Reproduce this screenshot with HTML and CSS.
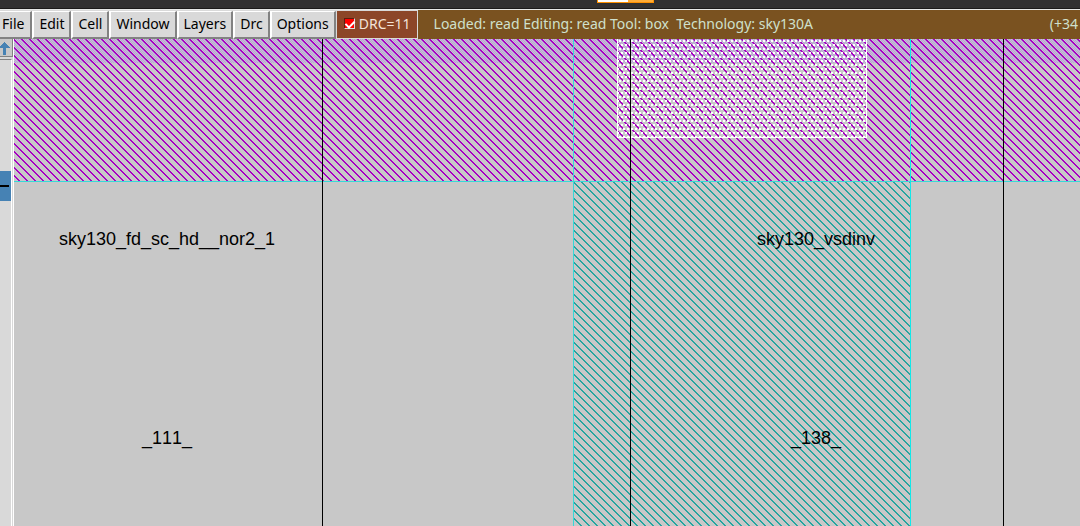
FILE: index.html
```html
<!DOCTYPE html>
<html lang="en">
<head>
<meta charset="utf-8">
<title>Magic layout</title>
<link rel="stylesheet" href="styles.css">
</head>
<body>
<div class="titlebar"><span class="tab"></span></div>
<header class="toolbar">
  <nav class="menus">
    <button>File</button><button>Edit</button><button>Cell</button><button>Window</button><button>Layers</button><button>Drc</button><button>Options</button>
  </nav>
  <label class="drc"><input type="checkbox" checked>DRC=11</label>
  <div class="status"><span class="loaded">Loaded: read Editing: read Tool: box&nbsp; Technology: sky130A</span><span class="coords">(+34</span></div>
</header>
<main class="workspace">
  <aside class="scroll">
    <button class="up" aria-label="Scroll up"><svg width="12" height="14" viewBox="0 0 12 14" shape-rendering="crispEdges"><path d="M4 0h1v1h1v1h1v1h1v1h1v1h1v1H6v7H3V6H0V4h1V3h1V2h1V1h1z" fill="#4682b4"/></svg></button>
    <div class="track"><div class="thumb"></div></div>
  </aside>
  <svg class="canvas" shape-rendering="crispEdges">
    <defs>
      <pattern id="metal" width="8" height="8" patternUnits="userSpaceOnUse" x="7">
        <path d="M0 0h2v1H0zM1 1h2v1H1zM2 2h2v1H2zM3 3h2v1H3zM4 4h2v1H4zM5 5h2v1H5zM6 6h2v1H6zM7 7h1v1H7zM0 7h1v1H0z" fill="#a800c4"/>
      </pattern>
      <pattern id="select" width="8" height="8" patternUnits="userSpaceOnUse">
        <path d="M0 0h2v1H0zM1 1h2v1H1zM2 2h2v1H2zM3 3h2v1H3zM4 4h2v1H4zM5 5h2v1H5zM6 6h2v1H6zM7 7h1v1H7zM0 7h1v1H0z" fill="#26a5a0"/>
      </pattern>
      <pattern id="well" width="2" height="2" patternUnits="userSpaceOnUse">
        <path d="M0 0h1v1H0zM1 1h1v1H1z" fill="#b49cdc"/>
      </pattern>
      <pattern id="contact" width="4" height="8" patternUnits="userSpaceOnUse" x="1" y="1">
        <path d="M0 0h2v2H0zM2 4h2v2H2z" fill="#fff"/>
      </pattern>
    </defs>
    <rect width="100%" height="24" fill="url(#well)"/>
    <rect width="100%" height="142" fill="url(#metal)"/>
    <rect x="560" y="143" width="336" height="100%" fill="url(#select)"/>
    <rect x="603" width="250" height="99" fill="url(#contact)"/>
    <path d="M603.5 0v98.5h249V0" fill="none" stroke="#fff"/>
    <path d="M0 142.500H1100M559.500 0V2000" stroke="#38d8d8"/>
    <path d="M896.500 0V2000" stroke="#12e8e8"/>
    <path d="M308.500 0V2000M616.500 0V2000M989.500 0V2000" stroke="#000"/>
    <g class="names" text-anchor="middle">
      <text x="153" y="206">sky130_fd_sc_hd__nor2_1</text>
      <text x="802" y="206">sky130_vsdinv</text>
      <text x="153" y="405">_111_</text>
      <text x="802" y="405">_138_</text>
    </g>
  </svg>
</main>
</body>
</html>
```
FILE: styles.css
```css
* { box-sizing: border-box; }
body {
  margin: 0;
  height: 100vh;
  display: flex;
  flex-direction: column;
  overflow: hidden;
  background: #c8c8c8;
  font: 14px "Noto Sans", sans-serif;
}
.titlebar {
  flex: none;
  height: 9px;
  padding-left: 597px;
  background: #323031;
  border-bottom: 1px solid #1c1a1a;
}
.tab {
  display: block;
  width: 57px;
  height: 3px;
  background: linear-gradient(90deg, #fff 30px, #ffac38 30px);
  border: solid #ff9000;
  border-width: 0 1px 1px;
}
.toolbar {
  flex: none;
  display: flex;
  height: 30px;
  border-top: 1px solid #e8e8e8;
  background: #7a5220;
  white-space: nowrap;
}
.menus {
  display: flex;
  padding-top: 1px;
  background: #d9d9d9;
}
.menus button {
  padding: 0 5px 2px;
  border: 1px solid;
  border-width: 1px 2px 2px;
  border-color: #fff #828282 #828282 #fff;
  background: #d9d9d9;
  color: #000;
  font: inherit;
}
.menus button:first-child {
  padding-left: 2px;
  padding-right: 6px;
  border-left: 0;
}
.drc {
  display: flex;
  align-items: center;
  gap: 4px;
  padding: 0 6px 2px 7px;
  border: 1px solid #d9d9d9;
  background: #8c4628;
  color: #f4e4d8;
}
.drc input {
  appearance: none;
  width: 11px;
  height: 11px;
  margin: 0;
  border: 1px solid;
  border-color: #5a2010 #ddd #ddd #5a2010;
  background: #f00;
  position: relative;
}
.drc input::after {
  content: "";
  position: absolute;
  left: 2px;
  top: 0;
  width: 4px;
  height: 7px;
  border: solid #fff;
  border-width: 0 2px 2px 0;
  transform: rotate(45deg);
}
.status {
  flex: 1;
  display: flex;
  align-items: center;
  justify-content: space-between;
  padding: 0 2px 2px 16px;
  color: #cfe0cc;
}
.workspace {
  flex: 1;
  display: flex;
  min-height: 0;
}
.scroll {
  flex: none;
  display: flex;
  flex-direction: column;
  width: 14px;
  border-right: 1px solid #fff;
  background: #d9d9d9;
}
.up {
  width: 13px;
  height: 18px;
  padding: 3px 0 0;
  display: flex;
  border: solid #828282;
  border-width: 0 1px 1px 0;
  background: #c8c8c8;
}
.track {
  flex: 1;
  width: 12px;
  margin-top: 2px;
  padding-top: 111px;
  border-top: 1px solid #828282;
  border-right: 1px solid #fff;
}
.thumb {
  height: 30px;
  padding: 14px 2px 14px 0;
  background: linear-gradient(#000 0 0) content-box, #4682b4;
}
.canvas {
  flex: 1;
  min-width: 0;
  height: 100%;
  display: block;
}
.names {
  font: 18px "Liberation Sans", sans-serif;
  font-kerning: none;
  fill: #000;
}
```
